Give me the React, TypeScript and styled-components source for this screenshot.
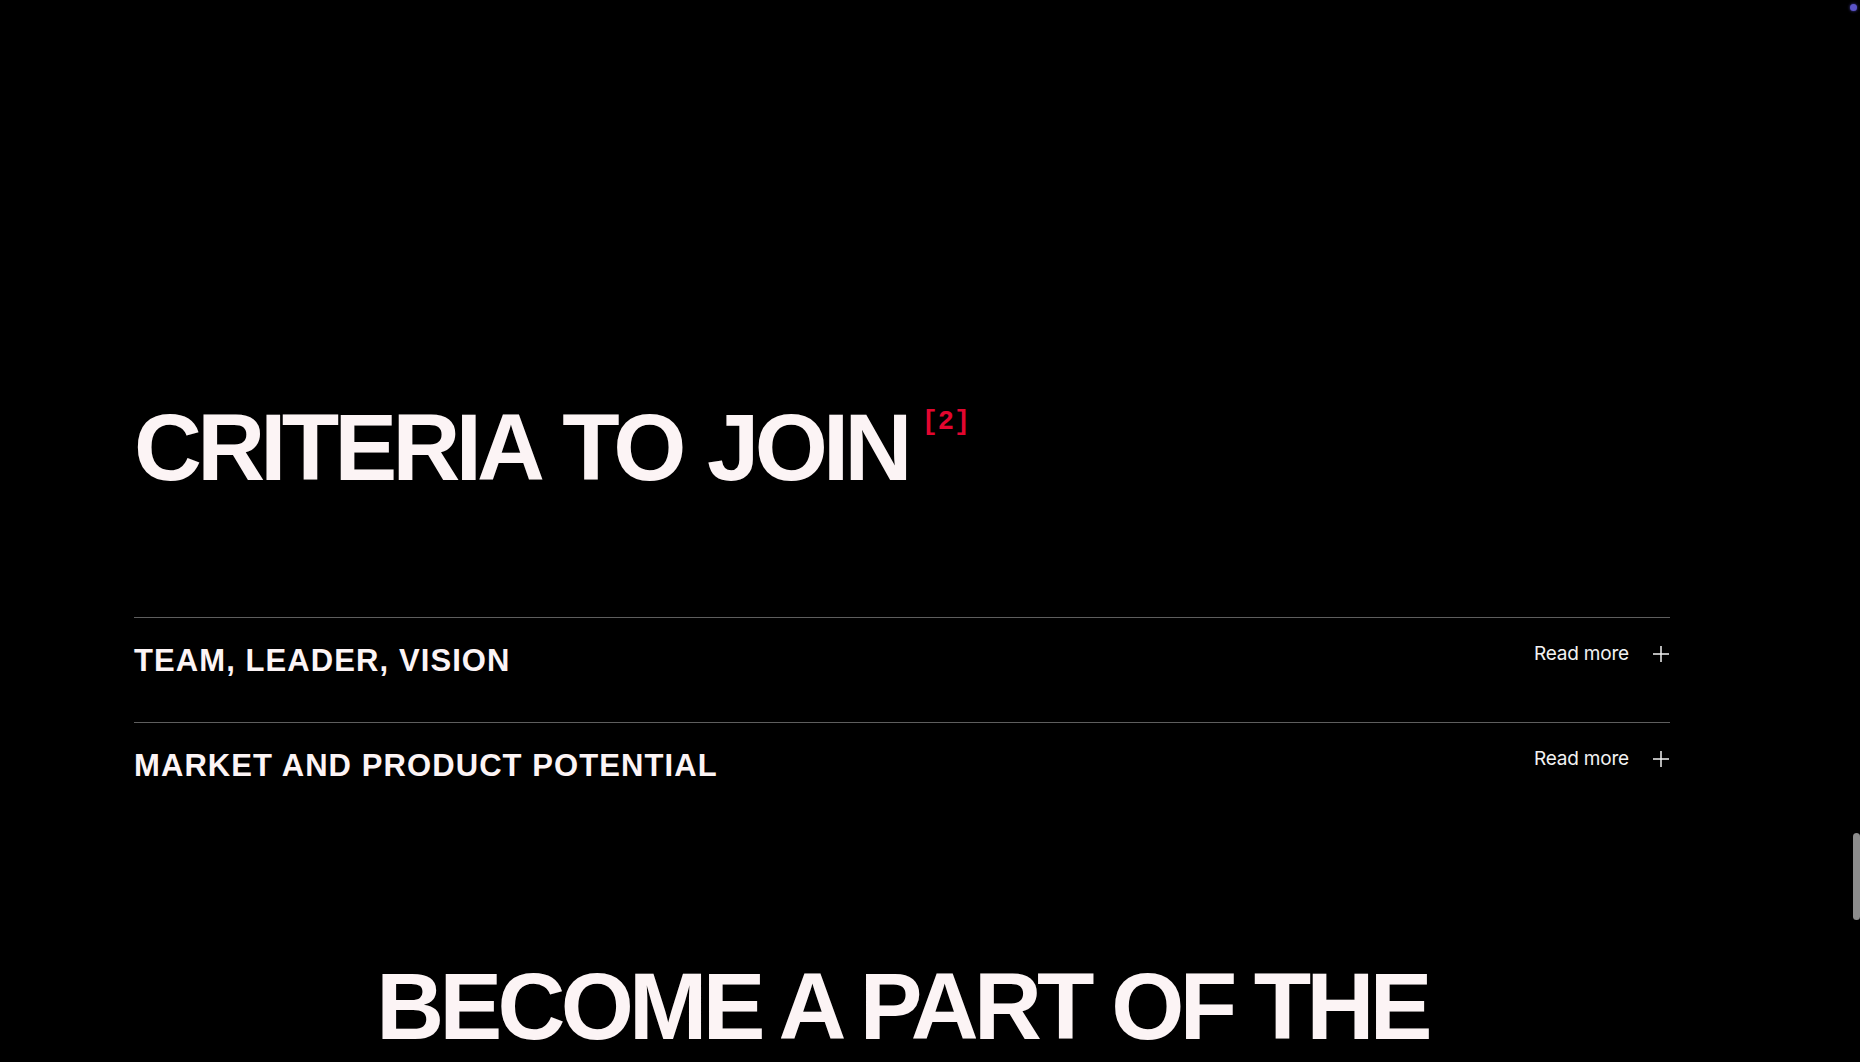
import React from 'react';
import styled, { createGlobalStyle } from 'styled-components';

const GlobalStyle = createGlobalStyle`
  html, body {
    margin: 0;
    padding: 0;
    height: 100%;
    overflow: hidden;
    background: #000000;
  }
  #root {
    height: 100%;
  }
  * {
    box-sizing: border-box;
  }
`;

const Page = styled.main`
  height: 100%;
  background: #000000;
  color: #fcf4f5;
  font-family: 'Liberation Sans', Arial, sans-serif;
  padding: 401px 190px 0 134px;
  overflow: hidden;
`;

const HeadingRow = styled.div`
  display: flex;
  align-items: flex-start;
  gap: 14px;
`;

const BigTitle = styled.h1<{ $center?: boolean }>`
  margin: 0;
  font-size: 94px;
  line-height: 1;
  font-weight: 700;
  letter-spacing: -0.05em;
  word-spacing: ${(p) => (p.$center ? '0' : '4px')};
  color: #fcf4f5;
  text-align: ${(p) => (p.$center ? 'center' : 'left')};
  white-space: nowrap;
`;

const Index = styled.span`
  font-family: 'Liberation Mono', 'DejaVu Sans Mono', monospace;
  font-size: 27px;
  font-weight: 700;
  line-height: 1;
  color: #e3062f;
  margin-top: 8px;
`;

const List = styled.div`
  margin-top: 122px;
  display: flex;
  flex-direction: column;
`;

const Row = styled.div`
  display: flex;
  justify-content: space-between;
  align-items: flex-start;
  height: 105px;
  padding-top: 27px;
  border-top: 1px solid #5e5e5e;
`;

const RowTitle = styled.h3`
  margin: 0;
  font-size: 31px;
  line-height: 1;
  font-weight: 700;
  letter-spacing: 0.035em;
  color: #fcf4f5;
`;

const ReadMore = styled.button`
  display: flex;
  align-items: center;
  gap: 23px;
  margin-top: -1px;
  padding: 0;
  border: none;
  background: none;
  color: #f2f2f2;
  font-family: Inter, 'Liberation Sans', sans-serif;
  font-size: 19px;
  line-height: 1;
  letter-spacing: -0.01em;
  cursor: pointer;
`;

const Closing = styled.section`
  margin-top: 133px;
`;

const ScrollThumb = styled.div`
  position: fixed;
  right: 0;
  top: 833px;
  width: 7px;
  height: 87px;
  border-radius: 4px;
  background: #8c8c8c;
`;

const Dot = styled.div`
  position: fixed;
  right: 3px;
  top: 4px;
  width: 7px;
  height: 7px;
  border-radius: 50%;
  background: #5b54c8;
  box-shadow: 0 0 3px #4a44a8;
`;

const Plus = () => (
  <svg width="18" height="18" viewBox="0 0 18 18" fill="none">
    <path d="M9 1v16M1 9h16" stroke="#f2f2f2" strokeWidth="1.5" />
  </svg>
);

const criteria = ['TEAM, LEADER, VISION', 'MARKET AND PRODUCT POTENTIAL'];

export default function App() {
  return (
    <>
      <GlobalStyle />
      <Page>
        <HeadingRow>
          <BigTitle>CRITERIA TO JOIN</BigTitle>
          <Index>[2]</Index>
        </HeadingRow>
        <List>
          {criteria.map((item) => (
            <Row key={item}>
              <RowTitle>{item}</RowTitle>
              <ReadMore type="button">
                Read more
                <Plus />
              </ReadMore>
            </Row>
          ))}
        </List>
        <Closing>
          <BigTitle $center>BECOME A PART OF THE</BigTitle>
        </Closing>
      </Page>
      <ScrollThumb />
      <Dot />
    </>
  );
}
